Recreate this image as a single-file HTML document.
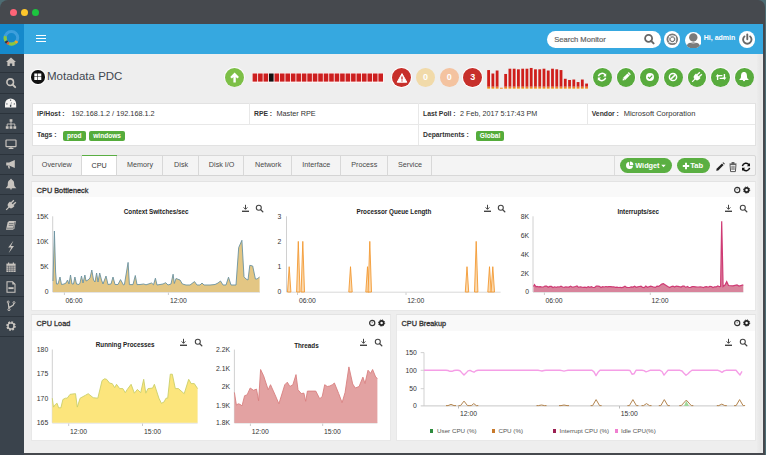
<!DOCTYPE html><html><head><meta charset="utf-8"><style>
*{margin:0;padding:0;box-sizing:border-box}
html,body{width:766px;height:455px;overflow:hidden;background:#4d6c73;font-family:"Liberation Sans",sans-serif}
.abs{position:absolute}
#frame{position:absolute;left:0;top:0;width:765px;height:455px;background:#46494e;border-radius:8px 7px 0 0;overflow:hidden}
#sidebar{position:absolute;left:0;top:24px;width:24px;height:431px;background:#3a434c}
#logo{position:absolute;left:0;top:24px;width:24px;height:29.5px;background:#1589cb}
#header{position:absolute;left:24px;top:24px;width:739px;height:29.5px;background:#36a8e0}
#content{position:absolute;left:24px;top:53.5px;width:739px;height:399px;background:#eeeeee}
.sep{position:absolute;left:0;width:24px;height:1px;background:#2b333b}
.t{position:absolute;white-space:nowrap;line-height:1}
.card{position:absolute;background:#fff;border:1px solid #e2e2e2}
.panel{position:absolute;background:#fff;border:1px solid #e8e8e8;border-top-color:#e3e3e3}
.ph{position:absolute;left:0;top:0;right:0;background:#f9f9f9}
.tab{position:absolute;top:154.8px;height:20.3px;background:#f4f4f4;border:1px solid #dcdcdc;border-left:none;font-size:7.2px;color:#555;text-align:center;line-height:19px}
.circ{position:absolute;border-radius:50%}
</style></head><body>
<div id="frame"></div>

<div class="circ" style="left:9.8px;top:8.8px;width:7.4px;height:7.4px;background:#fe6477"></div>
<div class="circ" style="left:20.8px;top:8.8px;width:7.4px;height:7.4px;background:#fec72c"></div>
<div class="circ" style="left:31.8px;top:8.8px;width:7.4px;height:7.4px;background:#1cc53f"></div>
<div id="sidebar"></div><div id="logo"></div><div id="header"></div><div id="content"></div><div class="abs" style="left:756.5px;top:53.5px;width:6.5px;height:399px;background:linear-gradient(90deg,#ececec,#e6e6e6 60%,#eaeaea)"></div>
<svg class="abs" style="left:0;top:24px" width="24" height="30" viewBox="0 24 24 30">
<circle cx="11.4" cy="37.8" r="6.3" fill="none" stroke="#3d9fdc" stroke-width="3"/>
<path d="M5.31 36.17 A6.3 6.3 0 0 0 5.94 40.95" fill="none" stroke="#8cc63f" stroke-width="3.1"/><path d="M5.94 40.95 A6.3 6.3 0 0 0 7.35 42.63" fill="none" stroke="#3a3a3a" stroke-width="3.1"/><path d="M7.35 42.63 A6.3 6.3 0 0 0 9.04 43.64" fill="none" stroke="#f05a28" stroke-width="3.1"/><path d="M9.04 43.64 A6.3 6.3 0 0 0 15.45 42.63" fill="none" stroke="#8cc63f" stroke-width="3.1"/><path d="M15.45 42.63 A6.3 6.3 0 0 0 16.86 40.95" fill="none" stroke="#f7a61a" stroke-width="3.1"/>
</svg>
<div class="abs" style="left:36px;top:35.0px;width:10px;height:1.1px;background:#fff"></div>
<div class="abs" style="left:36px;top:38.0px;width:10px;height:1.1px;background:#fff"></div>
<div class="abs" style="left:36px;top:41.0px;width:10px;height:1.1px;background:#fff"></div>
<div class="sep" style="top:72.3px"></div>
<div class="sep" style="top:92.6px"></div>
<div class="sep" style="top:112.9px"></div>
<div class="sep" style="top:133.2px"></div>
<div class="sep" style="top:153.5px"></div>
<div class="sep" style="top:173.8px"></div>
<div class="sep" style="top:194.1px"></div>
<div class="sep" style="top:214.4px"></div>
<div class="sep" style="top:234.7px"></div>
<div class="sep" style="top:255.0px"></div>
<div class="sep" style="top:275.3px"></div>
<div class="sep" style="top:295.6px"></div>
<div class="sep" style="top:315.9px"></div>
<div class="sep" style="top:336.2px"></div>
<svg class="abs" style="left:4.4px;top:55.3px" width="14" height="14" viewBox="0 0 14 14"><path d="M7 2.5 L12 7 L10.6 7 L10.6 11 L8.2 11 L8.2 8.4 L5.8 8.4 L5.8 11 L3.4 11 L3.4 7 L2 7 Z" fill="#c8c4bf"/></svg>
<svg class="abs" style="left:4.4px;top:75.5px" width="14" height="14" viewBox="0 0 14 14"><circle cx="6.2" cy="6.2" r="3.3" fill="none" stroke="#c8c4bf" stroke-width="1.6"/><path d="M8.5 8.5 L11.2 11.2" stroke="#c8c4bf" stroke-width="1.9" stroke-linecap="round"/></svg>
<svg class="abs" style="left:4.4px;top:95.8px" width="14" height="14" viewBox="0 0 14 14"><path d="M1 11.5 V8 A5.6 5.6 0 0 1 12.2 8 V11.5 Z" fill="#f6f5f3"/><circle cx="6.6" cy="4.2" r=".65" fill="#3a434c"/><circle cx="2.9" cy="7.9" r=".6" fill="#3a434c"/><circle cx="10.3" cy="7.9" r=".6" fill="#3a434c"/><path d="M6.6 9.8 L7.6 6.2" stroke="#8a8f94" stroke-width=".7"/><ellipse cx="6.6" cy="9.9" rx=".8" ry="1.1" fill="#3a434c"/></svg>
<svg class="abs" style="left:4.4px;top:116.7px" width="14" height="14" viewBox="0 0 14 14"><rect x="5.6" y="2.2" width="2.8" height="2.6" fill="#c8c4bf"/><rect x="1.8" y="9.2" width="2.8" height="2.6" fill="#c8c4bf"/><rect x="5.6" y="9.2" width="2.8" height="2.6" fill="#c8c4bf"/><rect x="9.4" y="9.2" width="2.8" height="2.6" fill="#c8c4bf"/><path d="M7 4.8 V9.2 M3.2 9.2 V7 H10.8 V9.2" fill="none" stroke="#c8c4bf" stroke-width=".9"/></svg>
<svg class="abs" style="left:4.4px;top:136.5px" width="14" height="14" viewBox="0 0 14 14"><rect x="2" y="3" width="10" height="6.6" rx=".6" fill="none" stroke="#c8c4bf" stroke-width="1.2"/><path d="M7 9.6 V11.2 M4.6 11.4 H9.4" stroke="#c8c4bf" stroke-width="1.1"/></svg>
<svg class="abs" style="left:4.4px;top:157.2px" width="14" height="14" viewBox="0 0 14 14"><path d="M2.2 5.6 H5 L10.8 3 V11 L5 8.4 H2.2 Z" fill="#c8c4bf"/><path d="M3.8 8.4 L4.6 11.4 H6 L5.4 8.4" fill="#c8c4bf"/></svg>
<svg class="abs" style="left:4.4px;top:178.2px" width="14" height="14" viewBox="0 0 14 14"><path d="M7 1.8 C9.8 1.8 10.2 4.4 10.2 6.6 C10.2 8.4 11 9.2 12.4 10.2 H1.6 C3 9.2 3.8 8.4 3.8 6.6 C3.8 4.4 4.2 1.8 7 1.8 Z" fill="#c8c4bf"/><path d="M5.8 10.2 A1.2 1.2 0 0 0 8.2 10.2 Z" fill="#c8c4bf"/><circle cx="7" cy="1.6" r=".8" fill="#c8c4bf"/></svg>
<svg class="abs" style="left:4.4px;top:198.0px" width="14" height="14" viewBox="0 0 14 14"><g transform="rotate(45 7 7)"><path d="M3.8 5.2 H10.2 V7 A3.2 3.2 0 0 1 3.8 7 Z" fill="#c8c4bf"/><rect x="4.9" y="1.6" width="1.4" height="3.8" fill="#c8c4bf"/><rect x="7.7" y="1.6" width="1.4" height="3.8" fill="#c8c4bf"/><rect x="6.4" y="9.6" width="1.2" height="4.2" fill="#c8c4bf"/></g></svg>
<svg class="abs" style="left:4.4px;top:218.8px" width="14" height="14" viewBox="0 0 14 14"><path d="M3.6 3.4 L5 2 H12 L10.4 9.4 L9 10.8 H2 Z" fill="#c8c4bf"/><path d="M2.6 9.2 H9.6 L11 2.6" fill="none" stroke="#3a434c" stroke-width=".6"/><path d="M5 4.6 H9.6 M4.7 6.4 H9.2" stroke="#3a434c" stroke-width=".6"/></svg>
<svg class="abs" style="left:4.4px;top:239.8px" width="14" height="14" viewBox="0 0 14 14"><path d="M9.4 0.8 L4.2 7.6 H7.2 L4.6 13.2 L10 6 H7 Z" fill="#c8c4bf"/></svg>
<svg class="abs" style="left:4.4px;top:260.0px" width="14" height="14" viewBox="0 0 14 14"><rect x="2.4" y="3.6" width="9.2" height="8.4" fill="#c8c4bf"/><path d="M4.6 2.4 V4.6 M9.4 2.4 V4.6" stroke="#c8c4bf" stroke-width="1.2"/><path d="M2.4 6.2 H11.6 M2.4 8.2 H11.6 M2.4 10.2 H11.6 M4.6 5.8 V12 M6.9 5.8 V12 M9.2 5.8 V12" stroke="#3a434c" stroke-width=".5"/></svg>
<svg class="abs" style="left:4.4px;top:279.5px" width="14" height="14" viewBox="0 0 14 14"><path d="M3 1.8 H8.6 L11 4.2 V12.2 H3 Z" fill="none" stroke="#c8c4bf" stroke-width="1.1"/><path d="M8.3 1.8 V4.5 H11" fill="#c8c4bf"/><rect x="4.4" y="7.2" width="5.2" height="1.9" fill="#c8c4bf"/></svg>
<svg class="abs" style="left:4.4px;top:299.2px" width="14" height="14" viewBox="0 0 14 14"><circle cx="4.2" cy="3" r="1" fill="none" stroke="#c8c4bf" stroke-width=".9"/><circle cx="10" cy="3.6" r="1" fill="none" stroke="#c8c4bf" stroke-width=".9"/><circle cx="5" cy="10.6" r="1.1" fill="none" stroke="#c8c4bf" stroke-width=".9"/><path d="M4.3 4 L4.9 9.5 M10 4.6 C10 7 6.6 7.4 5 8.6" fill="none" stroke="#c8c4bf" stroke-width="1.2"/></svg>
<svg class="abs" style="left:4.4px;top:319.0px" width="14" height="14" viewBox="0 0 14 14"><circle cx="7" cy="7" r="3.6" fill="none" stroke="#c8c4bf" stroke-width="2.4" stroke-dasharray="1.6 1.2"/><circle cx="7" cy="7" r="3.1" fill="none" stroke="#c8c4bf" stroke-width="1.4"/></svg>
<div class="abs" style="left:546.5px;top:31.4px;width:114.5px;height:16.6px;background:#fff;border-radius:9px"></div>
<div class="t" style="left:554.2px;top:35.6px;font-size:7.6px;color:#666;-webkit-text-stroke:0.2px #666">Search Monitor</div>
<svg class="abs" style="left:643px;top:33px" width="13" height="13" viewBox="0 0 13 13"><circle cx="5.6" cy="5.4" r="3.5" fill="none" stroke="#666" stroke-width="1.8"/><path d="M8.1 7.9 L10.6 10.4" stroke="#666" stroke-width="2" stroke-linecap="round"/></svg>
<div class="circ" style="left:663.9px;top:31.4px;width:16.6px;height:16.6px;background:#fff"></div>
<svg class="abs" style="left:663.9px;top:31.4px" width="16.6" height="16.6" viewBox="0 0 16.6 16.6"><circle cx="8.3" cy="8.3" r="4.9" fill="none" stroke="#7a7a7a" stroke-width="1.8"/><circle cx="8.3" cy="8.3" r="2.4" fill="none" stroke="#7a7a7a" stroke-width="1.3"/><path d="M4.8 4.8 L6.6 6.6 M11.8 4.8 L10 6.6 M4.8 11.8 L6.6 10 M11.8 11.8 L10 10" stroke="#fff" stroke-width="1"/></svg>
<svg class="abs" style="left:684.7px;top:31.6px" width="16.6" height="16.6" viewBox="0 0 16.6 16.6"><defs><clipPath id="av"><circle cx="8.3" cy="8.3" r="8.3"/></clipPath></defs><circle cx="8.3" cy="8.3" r="8.3" fill="#fff"/><g clip-path="url(#av)" fill="#7a7a7a"><circle cx="8.3" cy="5.4" r="4.2"/><ellipse cx="8.3" cy="16.4" rx="7.6" ry="6.6"/></g><path d="M2.6 10 Q8.3 12 14 10" fill="none" stroke="#fff" stroke-width=".8"/></svg>
<div class="t" style="left:703.8px;top:33.8px;font-size:7px;font-weight:bold;color:#fff">Hi, admin</div>
<div class="circ" style="left:738.8px;top:31.4px;width:16.6px;height:16.6px;background:#fff"></div>
<svg class="abs" style="left:738.8px;top:31.4px" width="16.6" height="16.6" viewBox="0 0 16.6 16.6"><path d="M5.5 5.4 A4.2 4.2 0 1 0 11.1 5.4" fill="none" stroke="#686868" stroke-width="1.9" stroke-linecap="round"/><path d="M8.3 3.4 V8.3" stroke="#686868" stroke-width="1.9" stroke-linecap="round"/></svg>
<div class="circ" style="left:30.2px;top:69.2px;width:15.6px;height:15.6px;background:#fff"></div>
<div class="circ" style="left:31.3px;top:70.3px;width:13.4px;height:13.4px;background:#111"></div>
<svg class="abs" style="left:31.3px;top:70.3px" width="13.4" height="13.4" viewBox="0 0 13.4 13.4"><path d="M3.3 3.6 H6.35 V6.4 H3.3 Z M6.95 3.6 H10.3 V6.4 H6.95 Z M3.3 7 H6.35 V9.9 H3.3 Z M6.95 7 H10.3 V9.9 H6.95 Z" fill="#fff"/></svg>
<div class="t" style="left:47px;top:70.9px;font-size:11.5px;color:#3f4750">Motadata PDC</div>
<div class="circ" style="left:224.2px;top:66.7px;width:20.8px;height:20.8px;background:#fff;opacity:.8"></div>
<div class="circ" style="left:225px;top:67.5px;width:19.2px;height:19.2px;background:#7dbf47"></div>
<svg class="abs" style="left:225px;top:67.5px" width="19.2" height="19.2" viewBox="0 0 19.2 19.2"><path d="M9.6 4.6 L14 9 L12.3 10.6 L10.8 9.1 V14.4 H8.4 V9.1 L6.9 10.6 L5.2 9 Z" fill="#fff"/></svg>
<div class="abs" style="left:251.6px;top:72.5px;width:132.4px;height:10.1px;background:#fdf3f3"></div>
<svg class="abs" style="left:0;top:0" width="400" height="100" viewBox="0 0 400 100"><rect x="252.60" y="73.5" width="4.6" height="8.1" fill="#cc1f1f"/><rect x="258.07" y="73.5" width="4.6" height="8.1" fill="#cc1f1f"/><rect x="263.54" y="73.5" width="4.6" height="8.1" fill="#cc1f1f"/><rect x="269.01" y="73.5" width="4.6" height="8.1" fill="#111"/><rect x="274.48" y="73.5" width="4.6" height="8.1" fill="#cc1f1f"/><rect x="279.95" y="73.5" width="4.6" height="8.1" fill="#cc1f1f"/><rect x="285.42" y="73.5" width="4.6" height="8.1" fill="#cc1f1f"/><rect x="290.89" y="73.5" width="4.6" height="8.1" fill="#cc1f1f"/><rect x="296.36" y="73.5" width="4.6" height="8.1" fill="#cc1f1f"/><rect x="301.83" y="73.5" width="4.6" height="8.1" fill="#cc1f1f"/><rect x="307.30" y="73.5" width="4.6" height="8.1" fill="#cc1f1f"/><rect x="312.77" y="73.5" width="4.6" height="8.1" fill="#cc1f1f"/><rect x="318.24" y="73.5" width="4.6" height="8.1" fill="#cc1f1f"/><rect x="323.71" y="73.5" width="4.6" height="8.1" fill="#cc1f1f"/><rect x="329.18" y="73.5" width="4.6" height="8.1" fill="#cc1f1f"/><rect x="334.65" y="73.5" width="4.6" height="8.1" fill="#cc1f1f"/><rect x="340.12" y="73.5" width="4.6" height="8.1" fill="#cc1f1f"/><rect x="345.59" y="73.5" width="4.6" height="8.1" fill="#cc1f1f"/><rect x="351.06" y="73.5" width="4.6" height="8.1" fill="#cc1f1f"/><rect x="356.53" y="73.5" width="4.6" height="8.1" fill="#cc1f1f"/><rect x="362.00" y="73.5" width="4.6" height="8.1" fill="#cc1f1f"/><rect x="367.47" y="73.5" width="4.6" height="8.1" fill="#cc1f1f"/><rect x="372.94" y="73.5" width="4.6" height="8.1" fill="#cc1f1f"/><rect x="378.41" y="73.5" width="4.6" height="8.1" fill="#cc1f1f"/></svg>
<div class="circ" style="left:391.3px;top:67.0px;width:21px;height:21px;background:#fff"></div>
<div class="circ" style="left:392.4px;top:68.1px;width:18.8px;height:18.8px;background:#c7302b"></div>
<svg class="abs" style="left:394.8px;top:70.5px" width="14" height="14" viewBox="0 0 14 14"><path d="M7 2.6 L11.8 11.2 H2.2 Z" fill="#fff" stroke="#fff" stroke-width="1" stroke-linejoin="round"/><path d="M7 5.4 V8.6" stroke="#c7302b" stroke-width="1.3"/><circle cx="7" cy="9.9" r=".7" fill="#c7302b"/></svg>
<div class="circ" style="left:416.1px;top:68.1px;width:18.8px;height:18.8px;background:#f1daa9"></div>
<div class="t" style="left:415.5px;top:73.2px;width:20px;text-align:center;font-size:9px;font-weight:bold;color:#fff">0</div>
<div class="circ" style="left:439.8px;top:68.1px;width:18.8px;height:18.8px;background:#f4c3a0"></div>
<div class="t" style="left:439.2px;top:73.2px;width:20px;text-align:center;font-size:9px;font-weight:bold;color:#fff">0</div>
<div class="circ" style="left:462.2px;top:67.0px;width:21px;height:21px;background:#fff"></div>
<div class="circ" style="left:463.3px;top:68.1px;width:18.8px;height:18.8px;background:#c7302b"></div>
<div class="t" style="left:462.7px;top:73.2px;width:20px;text-align:center;font-size:9px;font-weight:bold;color:#fff">3</div>
<svg class="abs" style="left:0;top:0" width="766" height="100" viewBox="0 0 766 100"><defs><linearGradient id="bg" x1="0" y1="0" x2="0" y2="1"><stop offset="0" stop-color="#e8601c"/><stop offset="1" stop-color="#f7b23a"/></linearGradient></defs><rect x="487.20" y="70.06" width="2.8" height="16.64" fill="#cf1f1b"/><rect x="487.20" y="86.70" width="2.8" height="2.10" fill="url(#bg)"/><rect x="491.46" y="73.51" width="2.8" height="13.19" fill="#cf1f1b"/><rect x="491.46" y="86.70" width="2.8" height="2.10" fill="url(#bg)"/><rect x="495.72" y="70.51" width="2.8" height="16.19" fill="#cf1f1b"/><rect x="495.72" y="86.70" width="2.8" height="2.10" fill="url(#bg)"/><rect x="499.98" y="87.77" width="2.8" height="1.03" fill="url(#bg)"/><rect x="504.24" y="73.96" width="2.8" height="12.74" fill="#cf1f1b"/><rect x="504.24" y="86.70" width="2.8" height="2.10" fill="url(#bg)"/><rect x="508.50" y="68.71" width="2.8" height="17.99" fill="#cf1f1b"/><rect x="508.50" y="86.70" width="2.8" height="2.10" fill="url(#bg)"/><rect x="512.76" y="68.71" width="2.8" height="17.99" fill="#cf1f1b"/><rect x="512.76" y="86.70" width="2.8" height="2.10" fill="url(#bg)"/><rect x="517.02" y="69.31" width="2.8" height="17.39" fill="#cf1f1b"/><rect x="517.02" y="86.70" width="2.8" height="2.10" fill="url(#bg)"/><rect x="521.28" y="68.71" width="2.8" height="17.99" fill="#cf1f1b"/><rect x="521.28" y="86.70" width="2.8" height="2.10" fill="url(#bg)"/><rect x="525.54" y="68.71" width="2.8" height="17.99" fill="#cf1f1b"/><rect x="525.54" y="86.70" width="2.8" height="2.10" fill="url(#bg)"/><rect x="529.80" y="67.96" width="2.8" height="18.74" fill="#cf1f1b"/><rect x="529.80" y="86.70" width="2.8" height="2.10" fill="url(#bg)"/><rect x="534.06" y="69.31" width="2.8" height="17.39" fill="#cf1f1b"/><rect x="534.06" y="86.70" width="2.8" height="2.10" fill="url(#bg)"/><rect x="538.32" y="69.31" width="2.8" height="17.39" fill="#cf1f1b"/><rect x="538.32" y="86.70" width="2.8" height="2.10" fill="url(#bg)"/><rect x="542.58" y="68.71" width="2.8" height="17.99" fill="#cf1f1b"/><rect x="542.58" y="86.70" width="2.8" height="2.10" fill="url(#bg)"/><rect x="546.84" y="70.51" width="2.8" height="16.19" fill="#cf1f1b"/><rect x="546.84" y="86.70" width="2.8" height="2.10" fill="url(#bg)"/><rect x="551.10" y="68.71" width="2.8" height="17.99" fill="#cf1f1b"/><rect x="551.10" y="86.70" width="2.8" height="2.10" fill="url(#bg)"/><rect x="555.36" y="69.31" width="2.8" height="17.39" fill="#cf1f1b"/><rect x="555.36" y="86.70" width="2.8" height="2.10" fill="url(#bg)"/><rect x="559.62" y="70.06" width="2.8" height="16.64" fill="#cf1f1b"/><rect x="559.62" y="86.70" width="2.8" height="2.10" fill="url(#bg)"/><rect x="563.88" y="78.77" width="2.8" height="7.93" fill="#cf1f1b"/><rect x="563.88" y="86.70" width="2.8" height="2.10" fill="url(#bg)"/><rect x="568.14" y="79.97" width="2.8" height="6.73" fill="#cf1f1b"/><rect x="568.14" y="86.70" width="2.8" height="2.10" fill="url(#bg)"/><rect x="572.40" y="79.52" width="2.8" height="7.18" fill="#cf1f1b"/><rect x="572.40" y="86.70" width="2.8" height="2.10" fill="url(#bg)"/><rect x="576.66" y="82.07" width="2.8" height="4.63" fill="#cf1f1b"/><rect x="576.66" y="86.70" width="2.8" height="2.10" fill="url(#bg)"/><rect x="580.92" y="79.52" width="2.8" height="7.18" fill="#cf1f1b"/><rect x="580.92" y="86.70" width="2.8" height="2.10" fill="url(#bg)"/><rect x="585.18" y="83.57" width="2.8" height="3.13" fill="#cf1f1b"/><rect x="585.18" y="86.70" width="2.8" height="2.10" fill="url(#bg)"/></svg>
<div class="circ" style="left:592.1px;top:67.1px;width:20.4px;height:20.4px;background:#fff;opacity:.7"></div>
<div class="circ" style="left:592.9px;top:67.9px;width:18.8px;height:18.8px;background:#58ab3d"></div>
<div class="circ" style="left:615.7px;top:67.1px;width:20.4px;height:20.4px;background:#fff;opacity:.7"></div>
<div class="circ" style="left:616.5px;top:67.9px;width:18.8px;height:18.8px;background:#58ab3d"></div>
<div class="circ" style="left:639.4px;top:67.1px;width:20.4px;height:20.4px;background:#fff;opacity:.7"></div>
<div class="circ" style="left:640.2px;top:67.9px;width:18.8px;height:18.8px;background:#58ab3d"></div>
<div class="circ" style="left:663.0px;top:67.1px;width:20.4px;height:20.4px;background:#fff;opacity:.7"></div>
<div class="circ" style="left:663.8px;top:67.9px;width:18.8px;height:18.8px;background:#58ab3d"></div>
<div class="circ" style="left:686.7px;top:67.1px;width:20.4px;height:20.4px;background:#fff;opacity:.7"></div>
<div class="circ" style="left:687.5px;top:67.9px;width:18.8px;height:18.8px;background:#58ab3d"></div>
<div class="circ" style="left:710.3px;top:67.1px;width:20.4px;height:20.4px;background:#fff;opacity:.7"></div>
<div class="circ" style="left:711.1px;top:67.9px;width:18.8px;height:18.8px;background:#58ab3d"></div>
<div class="circ" style="left:734.0px;top:67.1px;width:20.4px;height:20.4px;background:#fff;opacity:.7"></div>
<div class="circ" style="left:734.8px;top:67.9px;width:18.8px;height:18.8px;background:#58ab3d"></div>
<svg class="abs" style="left:595.3px;top:70.3px" width="14" height="14" viewBox="0 0 14 14"><path d="M3.4 6.2 A3.8 3.8 0 0 1 10.2 5" fill="none" stroke="#fff" stroke-width="1.5"/><path d="M11.2 3.2 V6.4 H8 Z" fill="#fff"/><path d="M10.6 7.8 A3.8 3.8 0 0 1 3.8 9" fill="none" stroke="#fff" stroke-width="1.5"/><path d="M2.8 10.8 V7.6 H6 Z" fill="#fff"/></svg>
<svg class="abs" style="left:618.9px;top:70.3px" width="14" height="14" viewBox="0 0 14 14"><g transform="rotate(-45 7 7)"><rect x="4.4" y="5.5" width="6.2" height="3" fill="#fff"/><path d="M4.2 5.5 L2.2 7 L4.2 8.5 Z" fill="#fff"/><rect x="11" y="5.5" width="1.4" height="3" fill="#fff"/></g></svg>
<svg class="abs" style="left:642.6px;top:70.3px" width="14" height="14" viewBox="0 0 14 14"><circle cx="7" cy="7" r="4" fill="#fff"/><path d="M5 7 L6.5 8.4 L9.2 5.6" fill="none" stroke="#58ab3d" stroke-width="1.2"/></svg>
<svg class="abs" style="left:666.2px;top:70.3px" width="14" height="14" viewBox="0 0 14 14"><circle cx="7" cy="7" r="3.6" fill="none" stroke="#fff" stroke-width="1.5"/><path d="M4.6 9.4 L9.4 4.6" stroke="#fff" stroke-width="1.5"/></svg>
<svg class="abs" style="left:689.9px;top:70.3px" width="14" height="14" viewBox="0 0 14 14"><g transform="rotate(45 7 7)"><path d="M3.8 5.2 H10.2 V7 A3.2 3.2 0 0 1 3.8 7 Z" fill="#fff"/><rect x="4.9" y="1.6" width="1.4" height="3.8" fill="#fff"/><rect x="7.7" y="1.6" width="1.4" height="3.8" fill="#fff"/><rect x="6.4" y="9.6" width="1.2" height="4.2" fill="#fff"/></g></svg>
<svg class="abs" style="left:713.5px;top:70.3px" width="14" height="14" viewBox="0 0 14 14"><path d="M3.6 10 V5.6 H8.4" fill="none" stroke="#fff" stroke-width="1.4"/><path d="M1.6 6.4 L3.6 4 L5.6 6.4 Z" fill="#fff"/><path d="M10.4 4 V8.4 H5.6" fill="none" stroke="#fff" stroke-width="1.4"/><path d="M12.4 7.6 L10.4 10 L8.4 7.6 Z" fill="#fff"/></svg>
<svg class="abs" style="left:737.2px;top:70.3px" width="14" height="14" viewBox="0 0 14 14"><path d="M7 2 C9.6 2 10 4.4 10 6.6 C10 8.4 10.8 9.2 12 10 H2 C3.2 9.2 4 8.4 4 6.6 C4 4.4 4.4 2 7 2 Z" fill="#fff"/><path d="M5.8 10 A1.2 1.2 0 0 0 8.2 10 Z" fill="#fff"/></svg>
<div class="card" style="left:31.8px;top:102.6px;width:724.2px;height:43.4px"></div>
<div class="abs" style="left:32.8px;top:123.6px;width:722.2px;height:1px;background:#e8e8e8"></div>
<div class="abs" style="left:248.8px;top:103.3px;width:1px;height:20.3px;background:#e8e8e8"></div>
<div class="abs" style="left:418.4px;top:103.3px;width:1px;height:20.3px;background:#e8e8e8"></div>
<div class="abs" style="left:587.1px;top:103.3px;width:1px;height:20.3px;background:#e8e8e8"></div>
<div class="t" style="left:37.0px;top:110.7px;font-size:6.8px;font-weight:bold;color:#333">IP/Host :</div>
<div class="t" style="left:71.5px;top:110.4px;font-size:7.3px;color:#333">192.168.1.2 / 192.168.1.2</div>
<div class="t" style="left:254.0px;top:110.7px;font-size:6.8px;font-weight:bold;color:#333">RPE :</div>
<div class="t" style="left:276.4px;top:110.4px;font-size:7.3px;color:#333">Master RPE</div>
<div class="t" style="left:423.0px;top:110.7px;font-size:6.8px;font-weight:bold;color:#333">Last Poll :</div>
<div class="t" style="left:460.1px;top:110.4px;font-size:7.2px;color:#333">2 Feb, 2017 5:17:43 PM</div>
<div class="t" style="left:591.7px;top:110.7px;font-size:6.8px;font-weight:bold;color:#333">Vendor :</div>
<div class="t" style="left:623.7px;top:110.4px;font-size:7.5px;color:#333">Microsoft Corporation</div>
<div class="t" style="left:37.0px;top:132.2px;font-size:6.8px;font-weight:bold;color:#333">Tags :</div>
<div class="t" style="left:423.0px;top:132.2px;font-size:6.8px;font-weight:bold;color:#333">Departments :</div>
<div class="t" style="left:62.9px;top:130.6px;width:22.9px;height:10px;background:#55ac3b;border-radius:2px;color:#fff;font-size:6.6px;font-weight:bold;text-align:center;line-height:10px">prod</div>
<div class="t" style="left:89.0px;top:130.6px;width:36.2px;height:10px;background:#55ac3b;border-radius:2px;color:#fff;font-size:6.6px;font-weight:bold;text-align:center;line-height:10px">windows</div>
<div class="abs" style="left:418.2px;top:124.6px;width:1px;height:20px;background:#e8e8e8"></div>
<div class="t" style="left:475.7px;top:130.8px;width:28.8px;height:9.8px;background:#55ac3b;border-radius:2px;color:#fff;font-size:6.6px;font-weight:bold;text-align:center;line-height:9.8px">Global</div>
<div class="abs" style="left:32px;top:154.8px;width:724px;height:21px;background:#f4f4f4;border:1px solid #d8d8d8;border-radius:2px"></div>
<div class="abs" style="left:32.0px;top:154.8px;width:49.6px;height:21px;background:#f4f4f4;border-right:1px solid #d8d8d8;border-top:1px solid #d8d8d8;border-bottom:1px solid #d4d4d4;border-left:1px solid #d8d8d8"></div>
<div class="t" style="left:32.0px;top:161.4px;width:49.6px;text-align:center;font-size:7.2px;color:#484848">Overview</div>
<div class="abs" style="left:81.6px;top:154.8px;width:35.2px;height:21px;background:#fff;border-right:1px solid #d8d8d8;border-top:1px solid #d8d8d8;border-bottom:1px solid #d4d4d4;"></div>
<div class="abs" style="left:81.6px;top:154.8px;width:35.2px;height:1.6px;background:#5aae43"></div>
<div class="t" style="left:81.6px;top:162.4px;width:35.2px;text-align:center;font-size:7.2px;color:#333">CPU</div>
<div class="abs" style="left:116.8px;top:154.8px;width:46.6px;height:21px;background:#f4f4f4;border-right:1px solid #d8d8d8;border-top:1px solid #d8d8d8;border-bottom:1px solid #d4d4d4;"></div>
<div class="t" style="left:116.8px;top:161.4px;width:46.6px;text-align:center;font-size:7.2px;color:#484848">Memory</div>
<div class="abs" style="left:163.4px;top:154.8px;width:35.4px;height:21px;background:#f4f4f4;border-right:1px solid #d8d8d8;border-top:1px solid #d8d8d8;border-bottom:1px solid #d4d4d4;"></div>
<div class="t" style="left:163.4px;top:161.4px;width:35.4px;text-align:center;font-size:7.2px;color:#484848">Disk</div>
<div class="abs" style="left:198.8px;top:154.8px;width:45.7px;height:21px;background:#f4f4f4;border-right:1px solid #d8d8d8;border-top:1px solid #d8d8d8;border-bottom:1px solid #d4d4d4;"></div>
<div class="t" style="left:198.8px;top:161.4px;width:45.7px;text-align:center;font-size:7.2px;color:#484848">Disk I/O</div>
<div class="abs" style="left:244.5px;top:154.8px;width:47.3px;height:21px;background:#f4f4f4;border-right:1px solid #d8d8d8;border-top:1px solid #d8d8d8;border-bottom:1px solid #d4d4d4;"></div>
<div class="t" style="left:244.5px;top:161.4px;width:47.3px;text-align:center;font-size:7.2px;color:#484848">Network</div>
<div class="abs" style="left:291.8px;top:154.8px;width:49.0px;height:21px;background:#f4f4f4;border-right:1px solid #d8d8d8;border-top:1px solid #d8d8d8;border-bottom:1px solid #d4d4d4;"></div>
<div class="t" style="left:291.8px;top:161.4px;width:49.0px;text-align:center;font-size:7.2px;color:#484848">Interface</div>
<div class="abs" style="left:340.8px;top:154.8px;width:47.0px;height:21px;background:#f4f4f4;border-right:1px solid #d8d8d8;border-top:1px solid #d8d8d8;border-bottom:1px solid #d4d4d4;"></div>
<div class="t" style="left:340.8px;top:161.4px;width:47.0px;text-align:center;font-size:7.2px;color:#484848">Process</div>
<div class="abs" style="left:387.8px;top:154.8px;width:44.4px;height:21px;background:#f4f4f4;border-right:1px solid #d8d8d8;border-top:1px solid #d8d8d8;border-bottom:1px solid #d4d4d4;"></div>
<div class="t" style="left:387.8px;top:161.4px;width:44.4px;text-align:center;font-size:7.2px;color:#484848">Service</div>
<div class="abs" style="left:614.3px;top:155.8px;width:1px;height:19px;background:#dcdcdc"></div>
<div class="abs" style="left:620.2px;top:158.3px;width:51.5px;height:14.3px;background:#5aaf42;border-radius:8px"></div>
<svg class="abs" style="left:625px;top:161px" width="9" height="9" viewBox="0 0 9 9"><path d="M4.2 1 A3.5 3.5 0 1 0 8 4.8 H4.2 Z" fill="#fff"/><path d="M5 0.6 A3.5 3.5 0 0 1 8.4 4 H5 Z" fill="#fff"/></svg>
<div class="t" style="left:635.3px;top:161.6px;font-size:7.3px;font-weight:bold;color:#fff">Widget</div>
<svg class="abs" style="left:660.5px;top:163.5px" width="5" height="4" viewBox="0 0 5 4"><path d="M0.3 0.8 H4.7 L2.5 3.2 Z" fill="#fff"/></svg>
<div class="abs" style="left:677px;top:158.3px;width:32.5px;height:14.3px;background:#5aaf42;border-radius:8px"></div>
<svg class="abs" style="left:682px;top:162px" width="8" height="8" viewBox="0 0 8 8"><path d="M4 0.8 V7.2 M0.8 4 H7.2" stroke="#fff" stroke-width="1.9"/></svg>
<div class="t" style="left:690.3px;top:161.6px;font-size:7.6px;font-weight:bold;color:#fff">Tab</div>
<svg class="abs" style="left:714px;top:160.7px" width="12" height="12" viewBox="0 0 12 12"><path d="M2.2 9.8 L2.6 7.8 L8 2.4 L9.6 4 L4.2 9.4 Z" fill="#222"/><path d="M8.6 1.8 L9.2 1.2 L10.8 2.8 L10.2 3.4 Z" fill="#222"/></svg>
<svg class="abs" style="left:727px;top:160.7px" width="12" height="12" viewBox="0 0 12 12"><path d="M3 3.4 H9 L8.4 10.6 H3.6 Z" fill="none" stroke="#555" stroke-width="1"/><path d="M2.4 2.8 H9.6 M4.8 2.6 V1.6 H7.2 V2.6 M4.9 4.8 V9 M6 4.8 V9 M7.1 4.8 V9" stroke="#555" stroke-width=".7"/></svg>
<svg class="abs" style="left:740px;top:160.7px" width="12" height="12" viewBox="0 0 12 12"><path d="M2.4 5.2 A3.6 3.6 0 0 1 9 4" fill="none" stroke="#111" stroke-width="1.5"/><path d="M10 2 V5.2 H6.8 Z" fill="#111"/><path d="M9.6 6.8 A3.6 3.6 0 0 1 3 8" fill="none" stroke="#111" stroke-width="1.5"/><path d="M2 10 V6.8 H5.2 Z" fill="#111"/></svg>
<div class="panel" style="left:30.9px;top:181.4px;width:724.7px;height:129.2px"><div class="ph" style="height:15.0px"></div></div>
<div class="t" style="left:36.8px;top:186.5px;font-size:7.3px;color:#333;-webkit-text-stroke:0.3px #333">CPU Bottleneck</div>
<svg class="abs" style="left:733.1px;top:185.9px" width="18" height="8" viewBox="0 0 18 8"><circle cx="4.2" cy="4" r="2.6" fill="none" stroke="#333" stroke-width="1.2"/><path d="M4.2 2.6 V4.2" fill="none" stroke="#333" stroke-width=".6"/><circle cx="13.6" cy="4" r="2.1" fill="none" stroke="#222" stroke-width="1.7"/><circle cx="13.6" cy="4" r="3.1" fill="none" stroke="#222" stroke-width="1" stroke-dasharray="1.2 1.23"/></svg>
<div class="panel" style="left:30.7px;top:314.3px;width:360.4px;height:126.6px"><div class="ph" style="height:15.5px"></div></div>
<div class="t" style="left:36.6px;top:319.7px;font-size:7.3px;color:#333;-webkit-text-stroke:0.3px #333">CPU Load</div>
<svg class="abs" style="left:367.6px;top:319.3px" width="18" height="8" viewBox="0 0 18 8"><circle cx="4.2" cy="4" r="2.6" fill="none" stroke="#333" stroke-width="1.2"/><path d="M4.2 2.6 V4.2" fill="none" stroke="#333" stroke-width=".6"/><circle cx="13.6" cy="4" r="2.1" fill="none" stroke="#222" stroke-width="1.7"/><circle cx="13.6" cy="4" r="3.1" fill="none" stroke="#222" stroke-width="1" stroke-dasharray="1.2 1.23"/></svg>
<div class="panel" style="left:395.6px;top:314.3px;width:360.0px;height:126.6px"><div class="ph" style="height:15.5px"></div></div>
<div class="t" style="left:401.5px;top:319.7px;font-size:7.3px;color:#333;-webkit-text-stroke:0.3px #333">CPU Breakup</div>
<svg class="abs" style="left:733.1px;top:319.3px" width="18" height="8" viewBox="0 0 18 8"><circle cx="4.2" cy="4" r="2.6" fill="none" stroke="#333" stroke-width="1.2"/><path d="M4.2 2.6 V4.2" fill="none" stroke="#333" stroke-width=".6"/><circle cx="13.6" cy="4" r="2.1" fill="none" stroke="#222" stroke-width="1.7"/><circle cx="13.6" cy="4" r="3.1" fill="none" stroke="#222" stroke-width="1" stroke-dasharray="1.2 1.23"/></svg>
<div class="t" style="left:56.2px;top:208.5px;width:200px;text-align:center;font-size:6.3px;font-weight:bold;color:#222">Context Switches/sec</div>
<svg class="abs" style="left:240.8px;top:203.7px" width="9" height="9" viewBox="0 0 9 9"><path d="M4.5 0.8 V5.2 M2.6 3.4 L4.5 5.3 L6.4 3.4" fill="none" stroke="#444" stroke-width="1"/><path d="M1 6.6 H8 V8 H1 Z" fill="#444"/></svg>
<svg class="abs" style="left:254.8px;top:203.7px" width="9" height="9" viewBox="0 0 9 9"><circle cx="3.8" cy="3.8" r="2.5" fill="none" stroke="#444" stroke-width="1.1"/><path d="M5.6 5.6 L7.8 7.8" stroke="#444" stroke-width="1.3" stroke-linecap="round"/></svg>
<div class="t" style="left:18.5px;top:213.6px;width:30px;text-align:right;font-size:6.8px;color:#333">15K</div>
<div class="t" style="left:18.5px;top:238.7px;width:30px;text-align:right;font-size:6.8px;color:#333">10K</div>
<div class="t" style="left:18.5px;top:264.2px;width:30px;text-align:right;font-size:6.8px;color:#333">5K</div>
<div class="t" style="left:18.5px;top:289.3px;width:30px;text-align:right;font-size:6.8px;color:#333">0</div>
<div class="t" style="left:59.0px;top:297.8px;width:30px;text-align:center;font-size:6.8px;color:#333">06:00</div>
<div class="t" style="left:163.4px;top:297.8px;width:30px;text-align:center;font-size:6.8px;color:#333">12:00</div>
<div class="t" style="left:293.9px;top:208.5px;width:200px;text-align:center;font-size:6.3px;font-weight:bold;color:#222">Processor Queue Length</div>
<svg class="abs" style="left:482.5px;top:203.7px" width="9" height="9" viewBox="0 0 9 9"><path d="M4.5 0.8 V5.2 M2.6 3.4 L4.5 5.3 L6.4 3.4" fill="none" stroke="#444" stroke-width="1"/><path d="M1 6.6 H8 V8 H1 Z" fill="#444"/></svg>
<svg class="abs" style="left:497.1px;top:203.7px" width="9" height="9" viewBox="0 0 9 9"><circle cx="3.8" cy="3.8" r="2.5" fill="none" stroke="#444" stroke-width="1.1"/><path d="M5.6 5.6 L7.8 7.8" stroke="#444" stroke-width="1.3" stroke-linecap="round"/></svg>
<div class="t" style="left:251.3px;top:213.6px;width:30px;text-align:right;font-size:6.8px;color:#333">3</div>
<div class="t" style="left:251.3px;top:238.7px;width:30px;text-align:right;font-size:6.8px;color:#333">2</div>
<div class="t" style="left:251.3px;top:264.0px;width:30px;text-align:right;font-size:6.8px;color:#333">1</div>
<div class="t" style="left:251.3px;top:289.3px;width:30px;text-align:right;font-size:6.8px;color:#333">0</div>
<div class="t" style="left:292.4px;top:297.8px;width:30px;text-align:center;font-size:6.8px;color:#333">06:00</div>
<div class="t" style="left:400.8px;top:297.8px;width:30px;text-align:center;font-size:6.8px;color:#333">12:00</div>
<div class="t" style="left:538.3px;top:208.5px;width:200px;text-align:center;font-size:6.3px;font-weight:bold;color:#222">Interrupts/sec</div>
<svg class="abs" style="left:724.2px;top:203.7px" width="9" height="9" viewBox="0 0 9 9"><path d="M4.5 0.8 V5.2 M2.6 3.4 L4.5 5.3 L6.4 3.4" fill="none" stroke="#444" stroke-width="1"/><path d="M1 6.6 H8 V8 H1 Z" fill="#444"/></svg>
<svg class="abs" style="left:738.7px;top:203.7px" width="9" height="9" viewBox="0 0 9 9"><circle cx="3.8" cy="3.8" r="2.5" fill="none" stroke="#444" stroke-width="1.1"/><path d="M5.6 5.6 L7.8 7.8" stroke="#444" stroke-width="1.3" stroke-linecap="round"/></svg>
<div class="t" style="left:499.0px;top:213.6px;width:30px;text-align:right;font-size:6.8px;color:#333">8K</div>
<div class="t" style="left:499.0px;top:232.5px;width:30px;text-align:right;font-size:6.8px;color:#333">6K</div>
<div class="t" style="left:499.0px;top:251.8px;width:30px;text-align:right;font-size:6.8px;color:#333">4K</div>
<div class="t" style="left:499.0px;top:270.7px;width:30px;text-align:right;font-size:6.8px;color:#333">2K</div>
<div class="t" style="left:499.0px;top:289.3px;width:30px;text-align:right;font-size:6.8px;color:#333">0</div>
<div class="t" style="left:539.0px;top:297.8px;width:30px;text-align:center;font-size:6.8px;color:#333">06:00</div>
<div class="t" style="left:645.0px;top:297.8px;width:30px;text-align:center;font-size:6.8px;color:#333">12:00</div>
<div class="t" style="left:25.2px;top:342.4px;width:200px;text-align:center;font-size:6.3px;font-weight:bold;color:#222">Running Processes</div>
<svg class="abs" style="left:179.1px;top:338.1px" width="9" height="9" viewBox="0 0 9 9"><path d="M4.5 0.8 V5.2 M2.6 3.4 L4.5 5.3 L6.4 3.4" fill="none" stroke="#444" stroke-width="1"/><path d="M1 6.6 H8 V8 H1 Z" fill="#444"/></svg>
<svg class="abs" style="left:193.7px;top:338.1px" width="9" height="9" viewBox="0 0 9 9"><circle cx="3.8" cy="3.8" r="2.5" fill="none" stroke="#444" stroke-width="1.1"/><path d="M5.6 5.6 L7.8 7.8" stroke="#444" stroke-width="1.3" stroke-linecap="round"/></svg>
<div class="t" style="left:18.2px;top:346.9px;width:30px;text-align:right;font-size:6.8px;color:#333">180</div>
<div class="t" style="left:18.2px;top:370.9px;width:30px;text-align:right;font-size:6.8px;color:#333">175</div>
<div class="t" style="left:18.2px;top:395.6px;width:30px;text-align:right;font-size:6.8px;color:#333">170</div>
<div class="t" style="left:18.2px;top:420.1px;width:30px;text-align:right;font-size:6.8px;color:#333">165</div>
<div class="t" style="left:63.6px;top:428.6px;width:30px;text-align:center;font-size:6.8px;color:#333">12:00</div>
<div class="t" style="left:137.6px;top:428.6px;width:30px;text-align:center;font-size:6.8px;color:#333">15:00</div>
<div class="t" style="left:206.4px;top:342.5px;width:200px;text-align:center;font-size:6.3px;font-weight:bold;color:#222">Threads</div>
<svg class="abs" style="left:358.9px;top:338.1px" width="9" height="9" viewBox="0 0 9 9"><path d="M4.5 0.8 V5.2 M2.6 3.4 L4.5 5.3 L6.4 3.4" fill="none" stroke="#444" stroke-width="1"/><path d="M1 6.6 H8 V8 H1 Z" fill="#444"/></svg>
<svg class="abs" style="left:373.7px;top:338.1px" width="9" height="9" viewBox="0 0 9 9"><circle cx="3.8" cy="3.8" r="2.5" fill="none" stroke="#444" stroke-width="1.1"/><path d="M5.6 5.6 L7.8 7.8" stroke="#444" stroke-width="1.3" stroke-linecap="round"/></svg>
<div class="t" style="left:200.0px;top:347.0px;width:30px;text-align:right;font-size:6.8px;color:#333">2.2K</div>
<div class="t" style="left:200.0px;top:365.6px;width:30px;text-align:right;font-size:6.8px;color:#333">2.1K</div>
<div class="t" style="left:200.0px;top:383.9px;width:30px;text-align:right;font-size:6.8px;color:#333">2K</div>
<div class="t" style="left:200.0px;top:402.5px;width:30px;text-align:right;font-size:6.8px;color:#333">1.9K</div>
<div class="t" style="left:200.0px;top:420.3px;width:30px;text-align:right;font-size:6.8px;color:#333">1.8K</div>
<div class="t" style="left:245.3px;top:428.6px;width:30px;text-align:center;font-size:6.8px;color:#333">12:00</div>
<div class="t" style="left:317.4px;top:428.6px;width:30px;text-align:center;font-size:6.8px;color:#333">15:00</div>
<svg class="abs" style="left:724.2px;top:338.1px" width="9" height="9" viewBox="0 0 9 9"><path d="M4.5 0.8 V5.2 M2.6 3.4 L4.5 5.3 L6.4 3.4" fill="none" stroke="#444" stroke-width="1"/><path d="M1 6.6 H8 V8 H1 Z" fill="#444"/></svg>
<svg class="abs" style="left:739.0px;top:338.1px" width="9" height="9" viewBox="0 0 9 9"><circle cx="3.8" cy="3.8" r="2.5" fill="none" stroke="#444" stroke-width="1.1"/><path d="M5.6 5.6 L7.8 7.8" stroke="#444" stroke-width="1.3" stroke-linecap="round"/></svg>
<div class="t" style="left:386.8px;top:350.0px;width:30px;text-align:right;font-size:6.8px;color:#333">150</div>
<div class="t" style="left:386.8px;top:367.7px;width:30px;text-align:right;font-size:6.8px;color:#333">100</div>
<div class="t" style="left:386.8px;top:386.1px;width:30px;text-align:right;font-size:6.8px;color:#333">50</div>
<div class="t" style="left:386.8px;top:403.3px;width:30px;text-align:right;font-size:6.8px;color:#333">0</div>
<div class="t" style="left:453.5px;top:411.4px;width:30px;text-align:center;font-size:6.8px;color:#333">12:00</div>
<div class="t" style="left:614.3px;top:411.4px;width:30px;text-align:center;font-size:6.8px;color:#333">15:00</div>
<svg class="abs" style="left:0;top:0" width="766" height="455" viewBox="0 0 766 455"><path d="M52.7 216.3 V292 M286.5 216.3 V292 M533 216.3 V292" stroke="#d0d0d0" stroke-width="1"/><path d="M52.7 292.2 H260 M286.5 292.2 H500.6 M533 292.2 H743.4" stroke="#d8d8d8" stroke-width="1"/><path d="M64.4 292.5 V295 M168.4 292.5 V295 M297.5 292.5 V295 M406 292.5 V295 M544.4 292.5 V295 M650.3 292.5 V295" stroke="#ccc" stroke-width="1"/><path d="M53.0 292.0 L53.0 281.0 L54.4 231.0 L55.6 272.0 L56.5 284.0 L58.0 284.0 L60.0 277.0 L61.5 284.5 L64.0 284.0 L66.0 283.0 L67.5 280.0 L69.0 284.0 L70.5 275.0 L72.0 284.0 L73.5 284.0 L74.9 277.0 L76.5 284.0 L79.0 284.5 L80.0 283.0 L81.5 276.0 L83.0 283.0 L84.9 275.0 L86.0 281.0 L88.0 280.0 L90.0 278.0 L91.8 270.0 L93.5 280.0 L95.0 282.0 L96.6 273.0 L98.0 282.0 L99.7 273.0 L101.5 280.0 L103.0 284.0 L106.0 276.0 L108.0 284.5 L111.0 284.0 L113.0 277.0 L115.0 284.5 L118.0 284.5 L120.5 279.6 L123.5 285.0 L124.4 284.6 L128.1 262.4 L129.4 284.6 L133.0 284.6 L135.3 275.5 L137.0 284.6 L140.0 284.5 L143.7 284.0 L146.0 284.8 L151.6 283.0 L153.5 284.8 L155.4 278.2 L157.0 285.0 L163.0 284.0 L165.7 282.7 L168.0 285.0 L171.0 284.0 L173.1 274.2 L174.3 283.5 L176.0 278.5 L180.0 280.0 L182.4 284.0 L186.0 285.0 L190.0 285.0 L194.5 281.6 L197.0 285.0 L200.0 285.0 L202.0 283.0 L204.0 285.0 L210.0 285.0 L215.0 284.5 L218.0 283.0 L220.5 281.0 L223.0 285.0 L226.0 285.0 L228.5 277.2 L231.0 285.0 L236.0 285.0 L238.7 247.6 L241.9 240.3 L244.0 276.8 L246.0 279.0 L248.0 280.0 L249.8 265.3 L252.7 266.0 L255.4 279.0 L257.0 279.0 L259.6 277.0 L259.6 292.0 Z" fill="#e3c683"/><path d="M53.0 281.0 L54.4 231.0 L55.6 272.0 L56.5 284.0 L58.0 284.0 L60.0 277.0 L61.5 284.5 L64.0 284.0 L66.0 283.0 L67.5 280.0 L69.0 284.0 L70.5 275.0 L72.0 284.0 L73.5 284.0 L74.9 277.0 L76.5 284.0 L79.0 284.5 L80.0 283.0 L81.5 276.0 L83.0 283.0 L84.9 275.0 L86.0 281.0 L88.0 280.0 L90.0 278.0 L91.8 270.0 L93.5 280.0 L95.0 282.0 L96.6 273.0 L98.0 282.0 L99.7 273.0 L101.5 280.0 L103.0 284.0 L106.0 276.0 L108.0 284.5 L111.0 284.0 L113.0 277.0 L115.0 284.5 L118.0 284.5 L120.5 279.6 L123.5 285.0 L124.4 284.6 L128.1 262.4 L129.4 284.6 L133.0 284.6 L135.3 275.5 L137.0 284.6 L140.0 284.5 L143.7 284.0 L146.0 284.8 L151.6 283.0 L153.5 284.8 L155.4 278.2 L157.0 285.0 L163.0 284.0 L165.7 282.7 L168.0 285.0 L171.0 284.0 L173.1 274.2 L174.3 283.5 L176.0 278.5 L180.0 280.0 L182.4 284.0 L186.0 285.0 L190.0 285.0 L194.5 281.6 L197.0 285.0 L200.0 285.0 L202.0 283.0 L204.0 285.0 L210.0 285.0 L215.0 284.5 L218.0 283.0 L220.5 281.0 L223.0 285.0 L226.0 285.0 L228.5 277.2 L231.0 285.0 L236.0 285.0 L238.7 247.6 L241.9 240.3 L244.0 276.8 L246.0 279.0 L248.0 280.0 L249.8 265.3 L252.7 266.0 L255.4 279.0 L257.0 279.0 L259.6 277.0" fill="none" stroke="#6a92a0" stroke-width="0.9"/><path d="M287.5 292 L289.2 266.7 L290.9 292 Z" fill="#fbd9ae" stroke="#f39a33" stroke-width="0.9" stroke-linejoin="miter"/><path d="M296.6 292 L298.3 241.4 L300.0 292 Z" fill="#fbd9ae" stroke="#f39a33" stroke-width="0.9" stroke-linejoin="miter"/><path d="M301.1 292 L302.8 241.4 L304.5 292 Z" fill="#fbd9ae" stroke="#f39a33" stroke-width="0.9" stroke-linejoin="miter"/><path d="M348.8 292 L350.5 266.7 L352.2 292 Z" fill="#fbd9ae" stroke="#f39a33" stroke-width="0.9" stroke-linejoin="miter"/><path d="M365.8 292 L367.5 266.7 L369.2 292 Z" fill="#fbd9ae" stroke="#f39a33" stroke-width="0.9" stroke-linejoin="miter"/><path d="M368.1 292 L369.8 241.4 L371.5 292 Z" fill="#fbd9ae" stroke="#f39a33" stroke-width="0.9" stroke-linejoin="miter"/><path d="M465.3 292 L467.0 266.7 L468.7 292 Z" fill="#fbd9ae" stroke="#f39a33" stroke-width="0.9" stroke-linejoin="miter"/><path d="M474.5 292 L476.2 241.4 L477.9 292 Z" fill="#fbd9ae" stroke="#f39a33" stroke-width="0.9" stroke-linejoin="miter"/><path d="M487.8 292 L489.5 266.7 L491.2 292 Z" fill="#fbd9ae" stroke="#f39a33" stroke-width="0.9" stroke-linejoin="miter"/><path d="M491.1 292 L492.8 266.7 L494.5 292 Z" fill="#fbd9ae" stroke="#f39a33" stroke-width="0.9" stroke-linejoin="miter"/><path d="M533.5 292.0 L533.5 286.5 L534.5 284.7 L536.0 286.8 L537.0 286.4 L538.6 286.9 L540.2 286.6 L541.8 287.0 L543.4 287.0 L545.0 286.1 L546.6 286.0 L548.2 287.3 L549.8 286.4 L551.4 286.4 L553.0 287.6 L554.6 286.8 L556.2 287.3 L557.8 286.8 L559.4 287.0 L561.0 286.2 L562.6 287.0 L564.2 287.4 L565.8 286.8 L567.4 287.2 L569.0 287.1 L570.6 286.1 L572.2 287.2 L573.8 286.9 L575.4 286.5 L577.0 286.0 L578.6 287.4 L580.2 286.8 L581.8 287.2 L583.4 287.4 L585.0 287.1 L586.6 287.5 L588.2 286.6 L589.8 287.3 L591.4 286.7 L593.0 287.5 L594.6 287.4 L596.2 286.2 L597.8 286.2 L599.4 286.3 L601.0 287.5 L602.6 286.7 L604.2 287.0 L605.8 286.5 L607.4 286.8 L609.0 286.6 L610.6 286.6 L612.2 286.9 L613.8 286.9 L615.4 287.4 L617.0 287.1 L618.6 287.5 L620.2 287.4 L621.8 287.6 L623.4 287.1 L625.0 286.3 L626.6 287.4 L628.2 287.5 L629.8 287.4 L631.4 286.9 L633.0 287.1 L634.6 286.3 L636.2 287.3 L637.8 286.9 L639.4 286.5 L641.0 286.1 L642.6 287.4 L644.2 287.6 L645.8 286.1 L647.4 287.3 L649.0 286.7 L650.6 286.2 L652.2 286.5 L653.8 287.2 L655.4 287.4 L657.0 286.1 L658.6 286.4 L660.2 285.3 L661.8 284.1 L663.4 283.6 L665.0 284.7 L666.6 285.8 L668.2 286.8 L669.8 287.6 L671.4 286.5 L673.0 286.1 L674.6 287.0 L676.2 286.1 L677.8 286.3 L679.4 286.7 L681.0 287.0 L682.6 286.2 L684.2 286.1 L685.8 287.4 L687.4 286.5 L689.0 287.5 L690.6 287.4 L692.2 286.6 L693.8 286.7 L695.4 286.8 L697.0 287.0 L698.6 287.0 L700.2 286.9 L701.8 287.0 L703.4 287.5 L705.0 286.8 L706.6 286.7 L708.2 287.2 L709.8 286.4 L711.4 286.5 L713.0 287.6 L714.6 286.8 L716.2 286.9 L717.8 286.0 L719.4 286.7 L720.6 286.5 L721.7 221.3 L723.1 286.5 L725.0 285.0 L726.7 281.7 L728.5 285.5 L733.0 285.8 L737.0 285.0 L739.0 286.0 L743.3 284.9 L743.3 292.0 Z" fill="#d8849c"/><path d="M533.5 286.5 L534.5 284.7 L536.0 286.8 L537.0 286.4 L538.6 286.9 L540.2 286.6 L541.8 287.0 L543.4 287.0 L545.0 286.1 L546.6 286.0 L548.2 287.3 L549.8 286.4 L551.4 286.4 L553.0 287.6 L554.6 286.8 L556.2 287.3 L557.8 286.8 L559.4 287.0 L561.0 286.2 L562.6 287.0 L564.2 287.4 L565.8 286.8 L567.4 287.2 L569.0 287.1 L570.6 286.1 L572.2 287.2 L573.8 286.9 L575.4 286.5 L577.0 286.0 L578.6 287.4 L580.2 286.8 L581.8 287.2 L583.4 287.4 L585.0 287.1 L586.6 287.5 L588.2 286.6 L589.8 287.3 L591.4 286.7 L593.0 287.5 L594.6 287.4 L596.2 286.2 L597.8 286.2 L599.4 286.3 L601.0 287.5 L602.6 286.7 L604.2 287.0 L605.8 286.5 L607.4 286.8 L609.0 286.6 L610.6 286.6 L612.2 286.9 L613.8 286.9 L615.4 287.4 L617.0 287.1 L618.6 287.5 L620.2 287.4 L621.8 287.6 L623.4 287.1 L625.0 286.3 L626.6 287.4 L628.2 287.5 L629.8 287.4 L631.4 286.9 L633.0 287.1 L634.6 286.3 L636.2 287.3 L637.8 286.9 L639.4 286.5 L641.0 286.1 L642.6 287.4 L644.2 287.6 L645.8 286.1 L647.4 287.3 L649.0 286.7 L650.6 286.2 L652.2 286.5 L653.8 287.2 L655.4 287.4 L657.0 286.1 L658.6 286.4 L660.2 285.3 L661.8 284.1 L663.4 283.6 L665.0 284.7 L666.6 285.8 L668.2 286.8 L669.8 287.6 L671.4 286.5 L673.0 286.1 L674.6 287.0 L676.2 286.1 L677.8 286.3 L679.4 286.7 L681.0 287.0 L682.6 286.2 L684.2 286.1 L685.8 287.4 L687.4 286.5 L689.0 287.5 L690.6 287.4 L692.2 286.6 L693.8 286.7 L695.4 286.8 L697.0 287.0 L698.6 287.0 L700.2 286.9 L701.8 287.0 L703.4 287.5 L705.0 286.8 L706.6 286.7 L708.2 287.2 L709.8 286.4 L711.4 286.5 L713.0 287.6 L714.6 286.8 L716.2 286.9 L717.8 286.0 L719.4 286.7 L720.6 286.5 L721.7 221.3 L723.1 286.5 L725.0 285.0 L726.7 281.7 L728.5 285.5 L733.0 285.8 L737.0 285.0 L739.0 286.0 L743.3 284.9" fill="none" stroke="#cf3b74" stroke-width="1.2"/><path d="M52.3 349.5 V422.7 M234.4 349.6 V422.9" stroke="#d0d0d0" stroke-width="1"/><path d="M52.3 423 H197.6 M234.4 423 H377.4" stroke="#d8d8d8" stroke-width="1"/><path d="M68.7 423.5 V426 M142.5 423.5 V426 M250.4 423.5 V426 M322.7 423.5 V426" stroke="#ccc" stroke-width="1"/><path d="M52.3 422.7 L52.3 398.2 L53.5 407.1 L55.3 404.5 L57.1 403.3 L58.6 407.8 L60.9 407.8 L62.9 399.5 L65.4 398.2 L67.2 398.2 L70.0 394.4 L74.8 393.7 L75.5 393.7 L77.3 407.1 L80.1 398.2 L85.6 395.2 L88.2 393.7 L93.2 397.7 L97.8 398.2 L102.1 380.5 L104.6 378.8 L106.6 379.3 L109.6 383.1 L112.2 383.6 L114.7 387.6 L116.5 384.3 L119.7 388.6 L122.8 388.6 L125.3 392.7 L127.3 389.4 L131.1 384.3 L134.4 393.2 L137.4 389.4 L140.7 392.7 L143.7 379.3 L145.8 393.2 L148.0 388.6 L152.6 388.1 L154.4 384.3 L158.9 398.2 L161.4 403.3 L164.0 402.0 L166.0 398.2 L167.7 398.2 L170.3 374.2 L172.3 374.2 L175.3 388.6 L178.4 388.6 L184.2 393.7 L188.7 379.3 L191.2 383.6 L194.3 383.6 L197.6 388.6 L197.6 422.7 Z" fill="#fce57c"/><path d="M52.3 398.2 L53.5 407.1 L55.3 404.5 L57.1 403.3 L58.6 407.8 L60.9 407.8 L62.9 399.5 L65.4 398.2 L67.2 398.2 L70.0 394.4 L74.8 393.7 L75.5 393.7 L77.3 407.1 L80.1 398.2 L85.6 395.2 L88.2 393.7 L93.2 397.7 L97.8 398.2 L102.1 380.5 L104.6 378.8 L106.6 379.3 L109.6 383.1 L112.2 383.6 L114.7 387.6 L116.5 384.3 L119.7 388.6 L122.8 388.6 L125.3 392.7 L127.3 389.4 L131.1 384.3 L134.4 393.2 L137.4 389.4 L140.7 392.7 L143.7 379.3 L145.8 393.2 L148.0 388.6 L152.6 388.1 L154.4 384.3 L158.9 398.2 L161.4 403.3 L164.0 402.0 L166.0 398.2 L167.7 398.2 L170.3 374.2 L172.3 374.2 L175.3 388.6 L178.4 388.6 L184.2 393.7 L188.7 379.3 L191.2 383.6 L194.3 383.6 L197.6 388.6" fill="none" stroke="#c9cf6a" stroke-width="0.9"/><path d="M234.4 422.9 L234.4 392.4 L236.4 405.1 L238.2 403.8 L240.0 404.3 L242.0 405.9 L244.6 395.7 L247.1 394.9 L250.2 388.0 L253.5 390.3 L256.5 389.1 L258.6 400.8 L260.6 369.5 L263.6 375.8 L268.2 389.8 L270.5 384.7 L275.1 394.9 L278.9 403.8 L284.8 384.7 L287.3 382.2 L289.9 386.5 L292.9 384.7 L296.0 374.6 L298.0 389.8 L301.3 393.6 L303.9 393.1 L305.7 401.3 L307.4 391.1 L312.0 391.1 L315.8 391.1 L319.7 398.7 L322.2 396.7 L324.7 384.7 L327.3 386.5 L329.8 386.0 L332.4 384.7 L334.4 383.0 L338.7 393.6 L342.1 402.6 L345.1 392.4 L348.9 366.9 L352.7 384.0 L355.3 388.0 L359.1 386.5 L362.9 377.1 L365.0 383.5 L368.0 370.2 L370.6 373.3 L372.6 369.5 L375.7 377.1 L377.4 378.4 L377.4 422.9 Z" fill="#e3a2a2"/><path d="M234.4 392.4 L236.4 405.1 L238.2 403.8 L240.0 404.3 L242.0 405.9 L244.6 395.7 L247.1 394.9 L250.2 388.0 L253.5 390.3 L256.5 389.1 L258.6 400.8 L260.6 369.5 L263.6 375.8 L268.2 389.8 L270.5 384.7 L275.1 394.9 L278.9 403.8 L284.8 384.7 L287.3 382.2 L289.9 386.5 L292.9 384.7 L296.0 374.6 L298.0 389.8 L301.3 393.6 L303.9 393.1 L305.7 401.3 L307.4 391.1 L312.0 391.1 L315.8 391.1 L319.7 398.7 L322.2 396.7 L324.7 384.7 L327.3 386.5 L329.8 386.0 L332.4 384.7 L334.4 383.0 L338.7 393.6 L342.1 402.6 L345.1 392.4 L348.9 366.9 L352.7 384.0 L355.3 388.0 L359.1 386.5 L362.9 377.1 L365.0 383.5 L368.0 370.2 L370.6 373.3 L372.6 369.5 L375.7 377.1 L377.4 378.4" fill="none" stroke="#d88080" stroke-width="0.9"/><path d="M424 352.6 V405.9" stroke="#ccc" stroke-width="0.9"/><path d="M420.7 352.6 H424 M420.7 370.3 H424 M420.7 388.7 H424" stroke="#ccc" stroke-width="0.9"/><path d="M420.7 405.9 H743.5" stroke="#c8c8c8" stroke-width="1"/><path d="M458.5 406 V408.5 M619.5 406 V408.5" stroke="#bbb" stroke-width="1"/><path d="M424.0 370.3 L426.0 370.3 L428.0 370.3 L430.0 370.3 L432.0 370.3 L434.0 370.3 L436.0 370.3 L438.0 370.3 L440.0 370.3 L442.0 370.3 L444.0 370.3 L446.0 370.3 L448.0 370.5 L450.0 371.3 L452.0 371.3 L454.0 370.5 L456.0 370.3 L458.0 370.3 L460.0 370.7 L462.0 372.9 L464.0 375.0 L466.0 373.1 L468.0 370.9 L470.0 370.3 L472.0 371.4 L474.0 372.2 L476.0 370.7 L478.0 370.3 L480.0 370.3 L482.0 370.3 L484.0 370.3 L486.0 370.3 L488.0 370.3 L490.0 370.3 L492.0 370.3 L494.0 370.3 L496.0 370.3 L498.0 370.3 L500.0 370.3 L502.0 370.3 L504.0 370.3 L506.0 370.3 L508.0 370.3 L510.0 370.3 L512.0 370.3 L514.0 370.3 L516.0 370.3 L518.0 370.3 L520.0 370.3 L522.0 370.3 L524.0 370.3 L526.0 370.3 L528.0 370.3 L530.0 370.3 L532.0 370.3 L534.0 370.3 L536.0 370.3 L538.0 370.3 L540.0 370.6 L542.0 371.0 L544.0 370.5 L546.0 370.3 L548.0 370.3 L550.0 370.3 L552.0 370.3 L554.0 370.3 L556.0 370.3 L558.0 370.3 L560.0 370.3 L562.0 370.6 L564.0 371.1 L566.0 370.6 L568.0 370.3 L570.0 370.3 L572.0 370.3 L574.0 370.3 L576.0 370.3 L578.0 370.3 L580.0 370.3 L582.0 370.3 L584.0 370.3 L586.0 370.3 L588.0 370.3 L590.0 370.3 L592.0 370.3 L594.0 371.9 L596.0 375.6 L598.0 372.3 L600.0 370.3 L602.0 370.3 L604.0 370.3 L606.0 370.3 L608.0 370.3 L610.0 370.3 L612.0 370.3 L614.0 370.3 L616.0 370.3 L618.0 370.3 L620.0 370.3 L622.0 370.3 L624.0 370.3 L626.0 370.3 L628.0 370.3 L630.0 370.5 L632.0 374.2 L634.0 373.8 L636.0 370.3 L638.0 370.3 L640.0 370.3 L642.0 370.3 L644.0 370.6 L646.0 371.8 L648.0 371.2 L650.0 370.3 L652.0 370.3 L654.0 370.3 L656.0 370.3 L658.0 370.3 L660.0 370.3 L662.0 371.5 L664.0 375.1 L666.0 372.6 L668.0 370.3 L670.0 370.3 L672.0 370.3 L674.0 370.3 L676.0 370.3 L678.0 370.3 L680.0 370.3 L682.0 371.0 L684.0 373.2 L686.0 375.3 L688.0 373.8 L690.0 371.7 L692.0 370.3 L694.0 370.3 L696.0 370.3 L698.0 370.3 L700.0 370.3 L702.0 370.3 L704.0 370.3 L706.0 370.3 L708.0 370.3 L710.0 370.3 L712.0 370.3 L714.0 370.3 L716.0 370.3 L718.0 370.3 L720.0 371.2 L722.0 372.4 L724.0 370.9 L726.0 370.3 L728.0 370.3 L730.0 370.3 L732.0 370.3 L734.0 370.3 L736.0 370.3 L738.0 372.8 L740.0 374.9 L742.0 371.4" fill="none" stroke="#f59ee6" stroke-width="1.4" stroke-linejoin="round"/><path d="M684 405.9 L686.3 400.8 L689 405.9 Z" fill="#9fd79a"/><path d="M446.0 405.6 L448.0 405.6 L451.0 404.4 L454.0 405.6 L456.0 405.6" fill="none" stroke="#b3844e" stroke-width="1"/><path d="M458.5 405.6 L460.5 405.6 L464.0 401.1 L467.5 405.6 L469.5 405.6" fill="none" stroke="#b3844e" stroke-width="1"/><path d="M469.3 405.6 L471.3 405.6 L473.8 403.6 L476.3 405.6 L478.3 405.6" fill="none" stroke="#b3844e" stroke-width="1"/><path d="M536.5 405.6 L538.5 405.6 L541.5 405.0 L544.5 405.6 L546.5 405.6" fill="none" stroke="#b3844e" stroke-width="1"/><path d="M559.0 405.6 L561.0 405.6 L564.0 405.0 L567.0 405.6 L569.0 405.6" fill="none" stroke="#b3844e" stroke-width="1"/><path d="M590.6 405.6 L592.6 405.6 L596.1 399.6 L599.6 405.6 L601.6 405.6" fill="none" stroke="#b3844e" stroke-width="1"/><path d="M627.4 405.6 L629.4 405.6 L632.9 399.6 L636.4 405.6 L638.4 405.6" fill="none" stroke="#b3844e" stroke-width="1"/><path d="M641.5 405.6 L643.5 405.6 L646.5 403.6 L649.5 405.6 L651.5 405.6" fill="none" stroke="#b3844e" stroke-width="1"/><path d="M658.8 405.6 L660.8 405.6 L664.3 399.6 L667.8 405.6 L669.8 405.6" fill="none" stroke="#b3844e" stroke-width="1"/><path d="M679.3 405.6 L681.3 405.6 L686.3 400.1 L691.3 405.6 L693.3 405.6" fill="none" stroke="#b3844e" stroke-width="1"/><path d="M716.8 405.6 L718.8 405.6 L721.8 404.1 L724.8 405.6 L726.8 405.6" fill="none" stroke="#b3844e" stroke-width="1"/><path d="M734.1 405.6 L736.1 405.6 L739.6 399.6 L743.1 405.6 L745.1 405.6" fill="none" stroke="#b3844e" stroke-width="1"/></svg>
<div class="abs" style="left:429.8px;top:429px;width:3.6px;height:3.6px;background:#2e8b3e"></div>
<div class="t" style="left:437.0px;top:427.9px;font-size:6.25px;color:#555">User CPU (%)</div>
<div class="abs" style="left:491.6px;top:429px;width:3.6px;height:3.6px;background:#c87a2c"></div>
<div class="t" style="left:498.4px;top:427.9px;font-size:6.25px;color:#555">CPU (%)</div>
<div class="abs" style="left:552.7px;top:429px;width:3.6px;height:3.6px;background:#9b1f52"></div>
<div class="t" style="left:559.5px;top:427.9px;font-size:6.25px;color:#555">Interrupt CPU (%)</div>
<div class="abs" style="left:614.8px;top:429px;width:3.6px;height:3.6px;background:#f07fd0"></div>
<div class="t" style="left:621.0px;top:427.9px;font-size:6.25px;color:#555">Idle CPU(%)</div>
</body></html>
